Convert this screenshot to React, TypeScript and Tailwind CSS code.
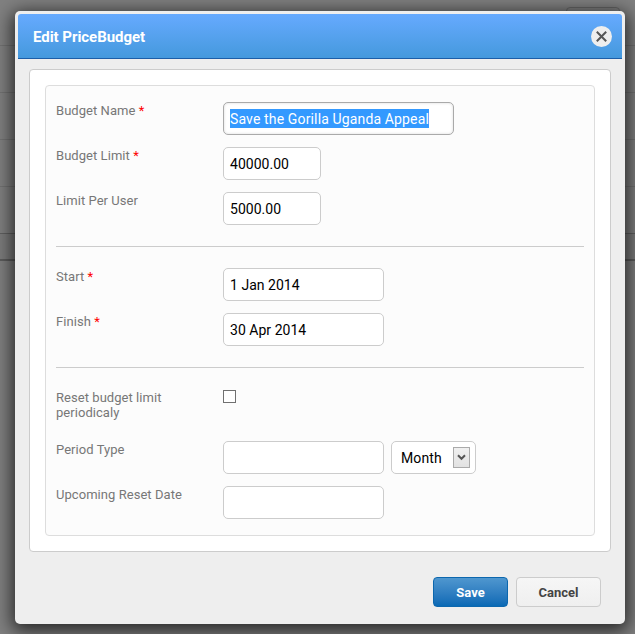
import React from 'react'

const Row: React.FC<{
  label: string
  required?: boolean
  children: React.ReactNode
}> = ({ label, required, children }) => (
  <div className="flex items-start">
    <label className="w-[167px] shrink-0 pt-px pr-9 text-[13px] leading-[15px] tracking-[0.05px] text-[#777]">
      {label}
      {required && <span className="text-[#f00]"> *</span>}
    </label>
    {children}
  </div>
)

const Field: React.FC<{ value?: string; className: string }> = ({ value, className }) => (
  <div
    className={`flex h-[33px] items-center rounded-[5px] border border-[#ccc] bg-white px-1.5 pt-0.5 text-[14px] tracking-[0.03px] text-black ${className}`}
  >
    {value}
  </div>
)

const Divider = () => <hr className="my-[21px] border-[#ccc]" />

// page rules that stay visible on both sides of the dialog
const Backdrop = () => (
  <div className="absolute inset-0 bg-[#808080]">
    <div className="h-[46px] border-b border-[#727272]" />
    <div className="h-[47px] border-b border-[#727272]" />
    <div className="h-[47px] border-b border-[#727272]" />
    <div className="h-[47px] border-b border-[#727272]" />
    <div className="h-[47px] border-b border-[#606060]" />
    <div className="h-[27px] border-b-2 border-[#5c5c5c] bg-[#7c7c7c]" />
    <div className="absolute top-[7px] left-[566px] h-8 w-[54px] rounded-[4px] border border-[#666]" />
  </div>
)

export default function App() {
  return (
    <div className="relative h-[634px] w-[635px] overflow-hidden font-['Roboto',sans-serif]">
      <Backdrop />
      <div className="relative mt-[11px] ml-[15px] h-[613px] w-[610px] rounded-[5px] bg-[#eee] p-[3px] shadow-[0_4px_18px_3px_rgba(0,0,0,0.7)]">
        <div className="flex h-[45px] items-center justify-between rounded-t-[3px] border-b border-[#1c5ea8] bg-linear-to-b from-[#66aaff] to-[#4499dd] pr-2.5 pl-[15px]">
          <h1 className="pt-[3px] text-[15px] font-bold tracking-[-0.04px] text-white">Edit PriceBudget</h1>
          <button className="flex size-[21px] items-center justify-center rounded-full bg-[#eee]">
            <svg width="11" height="11" viewBox="0 0 11 11" fill="none" stroke="#555" strokeWidth="2">
              <path d="M.8.8l9.4 9.4M10.2.8L.8 10.2" />
            </svg>
          </button>
        </div>

        <div className="mx-[11px] mt-2.5 h-[483px] rounded-[4px] border border-[#ccc] bg-white p-[15px]">
          <div className="h-[451px] rounded-[4px] border border-[#ddd] bg-[#fcfcfc] px-2.5 pt-4">
            <div className="flex flex-col gap-3">
              <Row label="Budget Name" required>
                <div className="flex h-[33px] w-[231px] items-center rounded-[5px] border border-[#aaa] bg-white px-1.5 text-[14px] shadow-[inset_0_0_3px_rgba(0,0,0,0.15)]">
                  <span className="h-[19px] w-[199px] bg-[#3399ff] pt-px leading-[18px] tracking-[0.14px] whitespace-nowrap text-white">
                    Save the Gorilla Uganda Appeal
                  </span>
                </div>
              </Row>
              <Row label="Budget Limit" required>
                <Field value="40000.00" className="w-[98px]" />
              </Row>
              <Row label="Limit Per User">
                <Field value="5000.00" className="w-[98px]" />
              </Row>
            </div>
            <Divider />
            <div className="flex flex-col gap-3">
              <Row label="Start" required>
                <Field value="1 Jan 2014" className="w-[161px]" />
              </Row>
              <Row label="Finish" required>
                <Field value="30 Apr 2014" className="w-[161px]" />
              </Row>
            </div>
            <Divider />
            <div className="flex flex-col gap-3">
              <div className="h-10">
                <Row label="Reset budget limit periodicaly">
                  <div className="mt-px size-[13px] border border-[#707070] bg-white" />
                </Row>
              </div>
              <Row label="Period Type">
                <Field className="w-[161px]" />
                <div className="ml-[7px] flex h-[33px] w-[85px] items-center justify-between rounded-[5px] border border-[#ccc] bg-white pr-[5px] pl-[9px] text-[14px] text-black">
                  <span className="pt-0.5 tracking-[0.1px]">Month</span>
                  <span className="flex h-[21px] w-[17px] items-center justify-center border border-[#aaa] bg-linear-to-b from-[#f0f0f0] to-[#e2e2e2]">
                    <svg width="9" height="7" viewBox="0 0 9 7" fill="none" stroke="#555" strokeWidth="2">
                      <path d="M1 1.2l3.5 3.6L8 1.2" />
                    </svg>
                  </span>
                </div>
              </Row>
              <Row label="Upcoming Reset Date">
                <Field className="w-[161px]" />
              </Row>
            </div>
          </div>
        </div>

        <div className="mt-[25px] mr-[21px] flex justify-end gap-2 text-[13px] font-bold">
          <button className="h-[30px] w-[75px] rounded-[4px] border border-[#0c67ae] bg-linear-to-b from-[#4f97cf] to-[#0769b5] pt-0.5 text-white">
            Save
          </button>
          <button className="h-[30px] w-[85px] rounded-[4px] border border-[#ccc] bg-linear-to-b from-[#f6f6f6] to-[#efefef] pt-0.5 text-[#444]">
            Cancel
          </button>
        </div>
      </div>
    </div>
  )
}
